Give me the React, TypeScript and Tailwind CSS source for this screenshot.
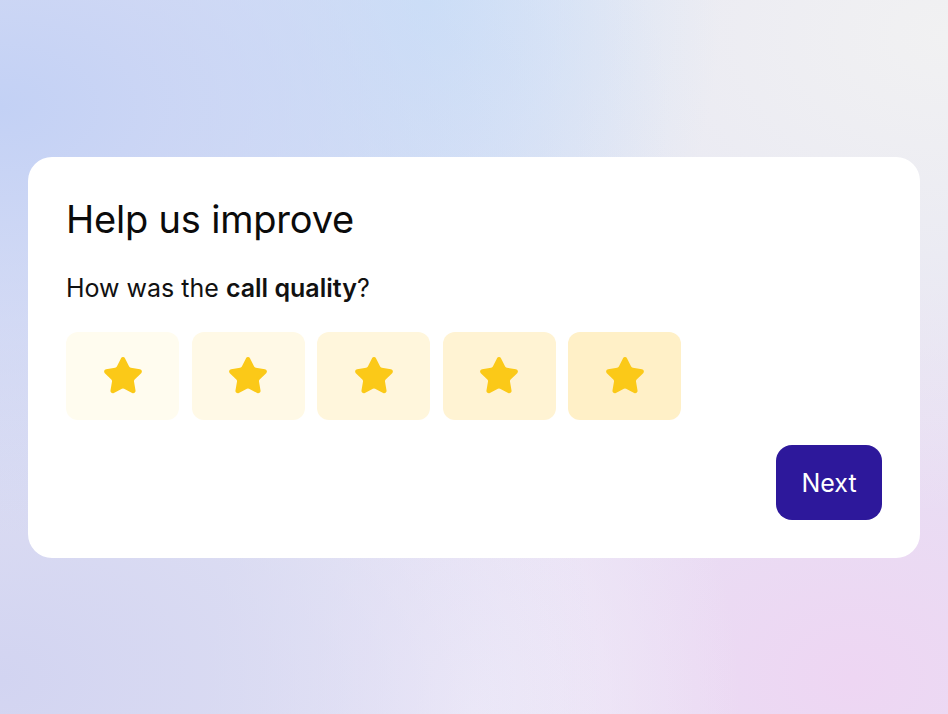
import React from "react";

const boxColors = [
  "bg-[#fffcef]",
  "bg-[#fff9e6]",
  "bg-[#fff6dc]",
  "bg-[#fff3d3]",
  "bg-[#fff0c7]",
];

function Star() {
  return (
    <svg width="42" height="42" viewBox="0 0 24 24" fill="#fbc918" stroke="#fbc918" strokeWidth="1.6" strokeLinejoin="round">
      <path d="M11.525 2.295a.53.53 0 0 1 .95 0l2.31 4.679a2.123 2.123 0 0 0 1.595 1.16l5.166.756a.53.53 0 0 1 .294.904l-3.736 3.638a2.123 2.123 0 0 0-.611 1.878l.882 5.14a.53.53 0 0 1-.771.56l-4.618-2.428a2.122 2.122 0 0 0-1.973 0L6.396 21.01a.53.53 0 0 1-.77-.56l.881-5.139a2.122 2.122 0 0 0-.611-1.879L2.16 9.795a.53.53 0 0 1 .294-.906l5.165-.755a2.122 2.122 0 0 0 1.597-1.16z" />
    </svg>
  );
}

export default function App() {
  return (
    <div
      className="min-h-[714px] w-full flex items-center px-[28px] bg-[#e4e4f4] bg-[radial-gradient(ellipse_at_0%_15%,#c3d1f5_0%,transparent_50%),radial-gradient(ellipse_at_45%_0%,#cfe3f8_0%,transparent_40%),radial-gradient(ellipse_at_100%_5%,#f1f1f2_0%,transparent_50%),radial-gradient(ellipse_at_0%_95%,#d2d4f1_0%,transparent_45%),radial-gradient(ellipse_at_50%_100%,#f1ecf9_0%,transparent_40%),radial-gradient(ellipse_at_90%_95%,#eed6f3_0%,transparent_45%)]"
      style={{ fontFamily: "Inter, 'Noto Sans', sans-serif" }}
    >
      <div className="w-full bg-white rounded-[24px] pt-[42px] pb-[38px] px-[38px] flex flex-col">
        <h1 className="text-[38px] leading-[40px] font-normal text-[#0b0b0b] tracking-[-0.2px]">Help us improve</h1>
        <p className="mt-[33px] text-[25px] leading-[32px] text-[#111]">
          How was the <span className="font-semibold">call quality</span>?
        </p>
        <div className="mt-[28px] flex gap-[12.5px]">
          {boxColors.map((c, i) => (
            <div key={i} className={`w-[113px] h-[88px] rounded-[12px] flex items-center justify-center ${c}`}>
              <Star />
            </div>
          ))}
        </div>
        <div className="mt-[25px] flex justify-end">
          <button className="w-[106px] h-[75px] rounded-[16px] bg-[#2d189b] text-white text-[25px] font-normal pt-[3px]">
            Next
          </button>
        </div>
      </div>
    </div>
  );
}
